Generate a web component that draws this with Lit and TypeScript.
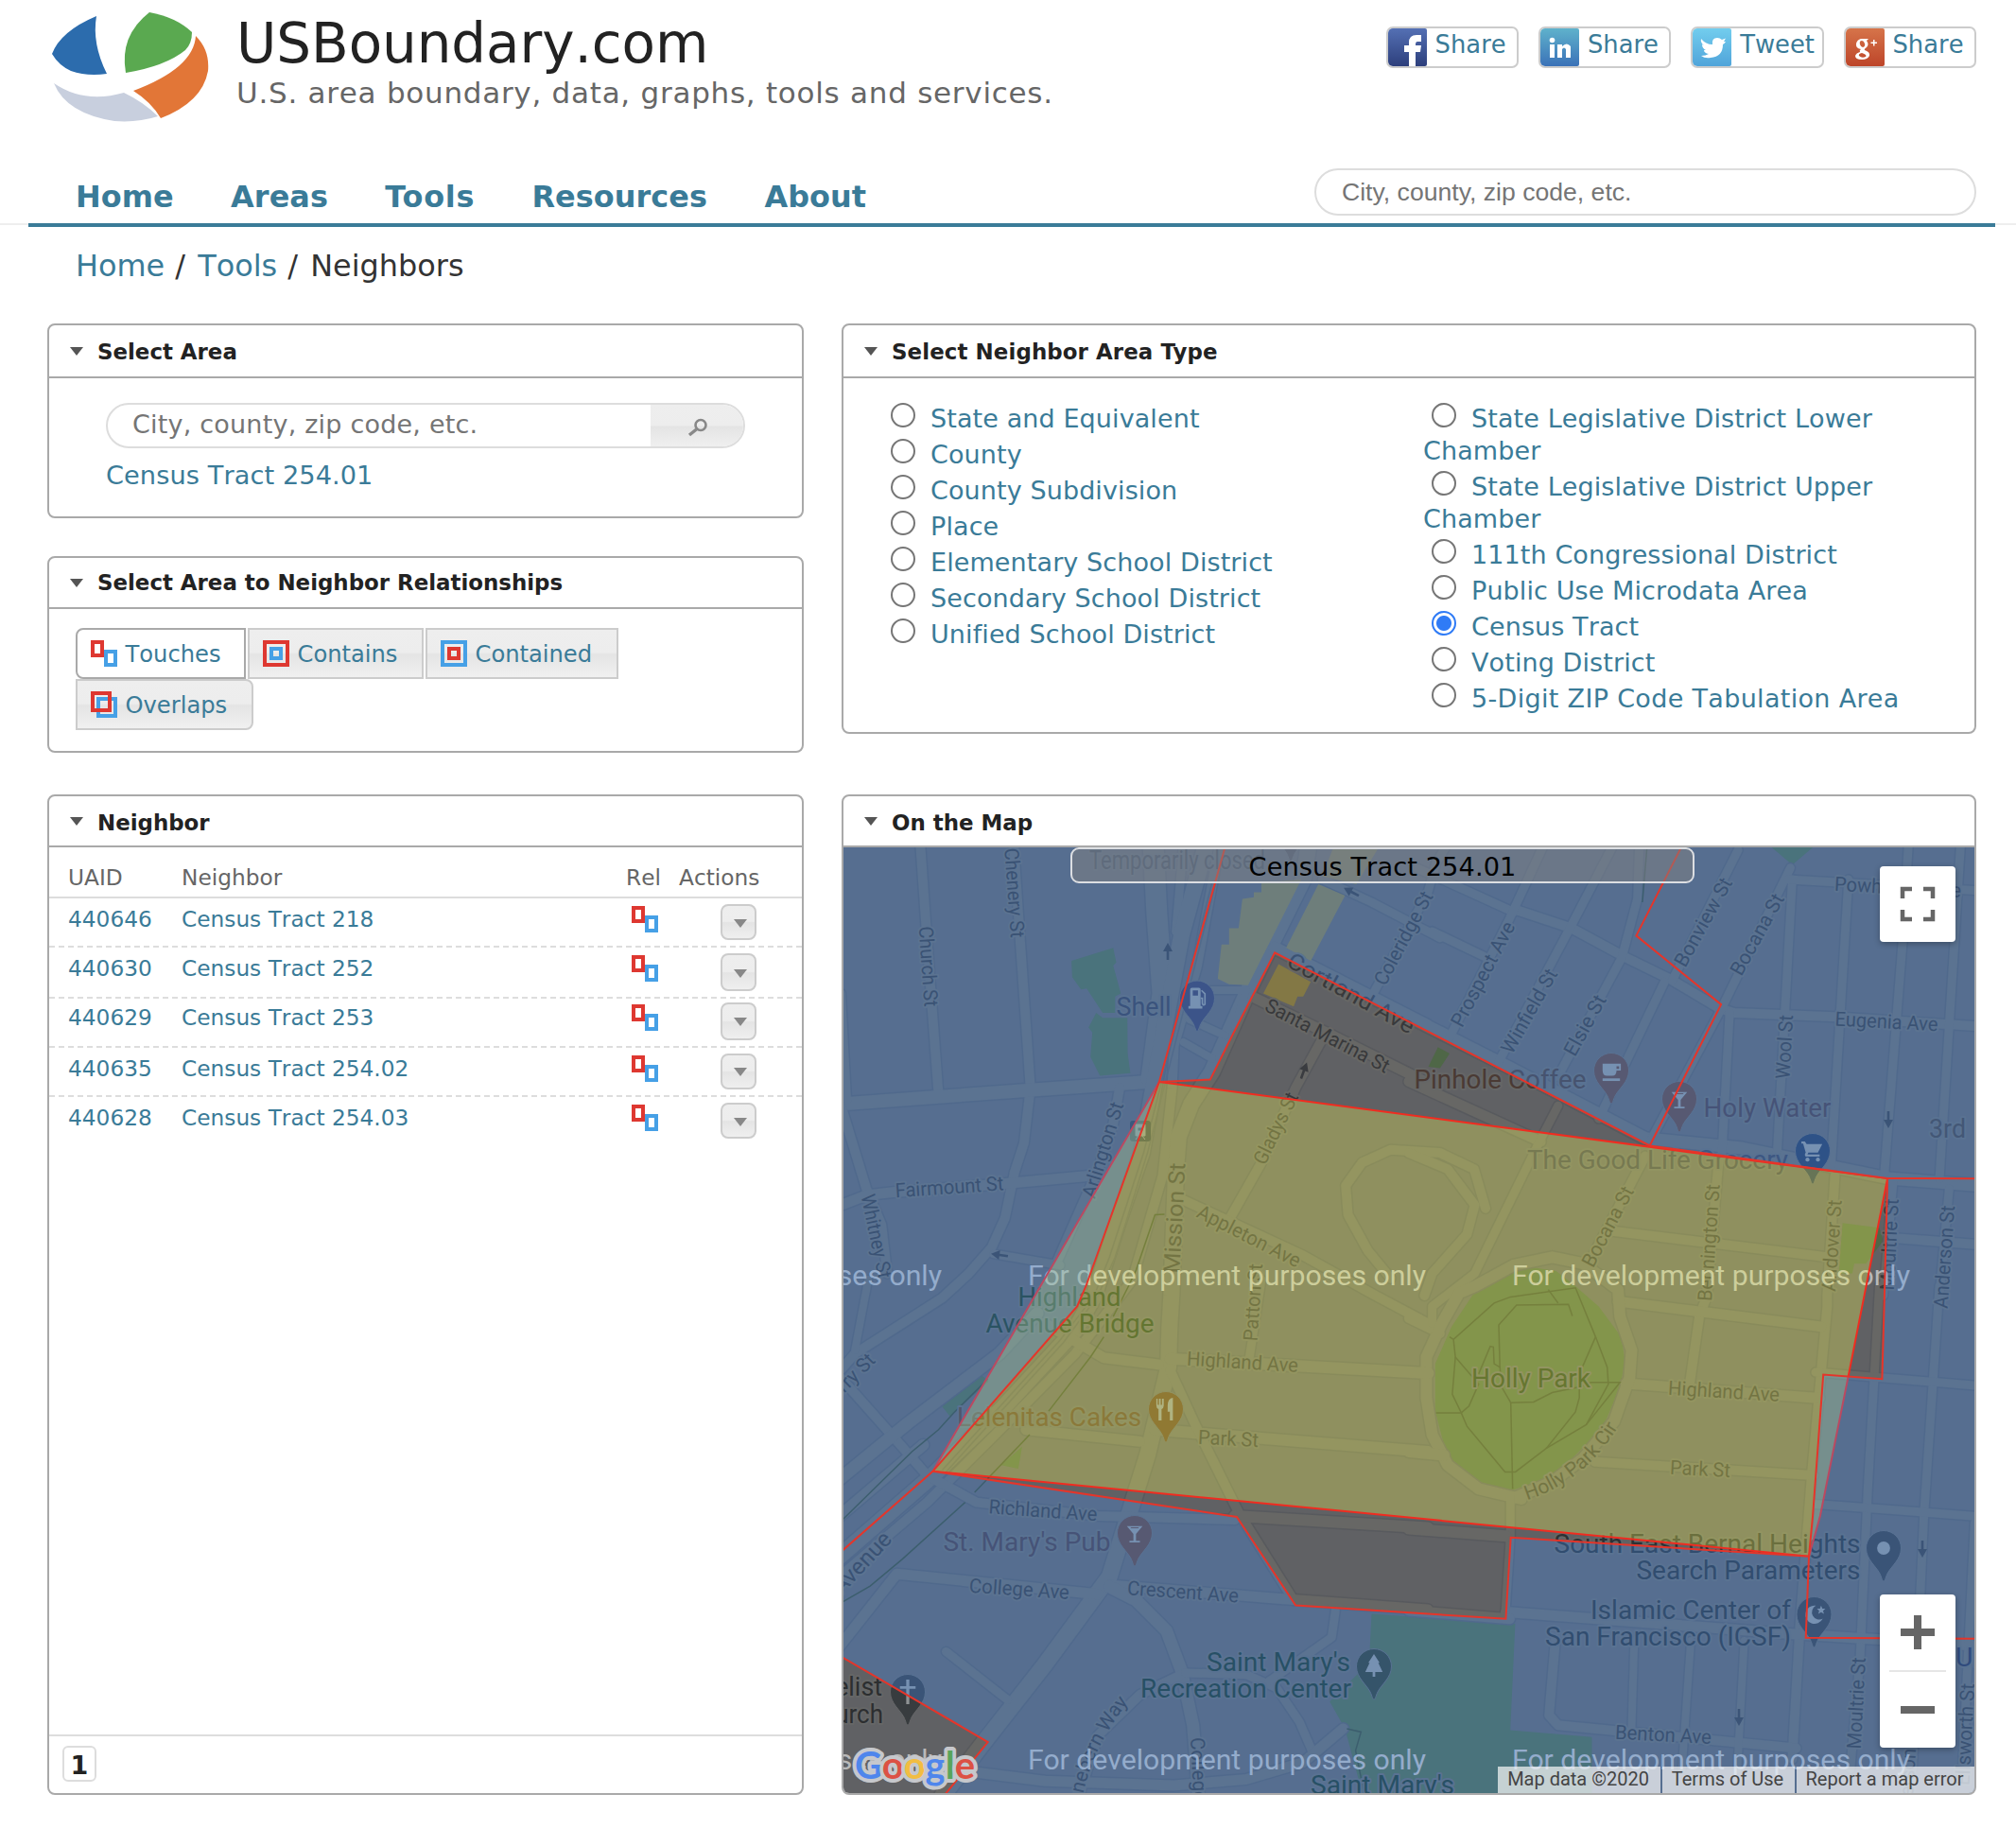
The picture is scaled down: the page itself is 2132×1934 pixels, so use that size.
import { LitElement, html, svg, css, nothing } from "lit";
import { customElement, property } from "lit/decorators.js";
import { classMap } from "lit/directives/class-map.js";

/* ---------- map survey sheets: origin and units per pixel ---------- */
const SHEETS: Record<string, [number, number, number, number]> = {
  A: [880, 830, 2.489, 2.904],
  B: [1490, 830, 2.442, 2.904],
  C: [880, 1360, 2.489, 2.8],
  D: [1490, 1360, 2.442, 2.8],
};

/** Turns "A 10,20 30,40 B 5,6" into map coordinates "x,y x,y". */
function trace(src: string): string {
  let s = SHEETS.A;
  const out: string[] = [];
  for (const tok of src.trim().split(/\s+/)) {
    if (SHEETS[tok]) s = SHEETS[tok];
    else {
      const [x, y] = tok.split(",").map(Number);
      out.push(`${(s[0] + x / s[2]).toFixed(1)},${(s[1] + y / s[3]).toFixed(1)}`);
    }
  }
  return out.join(" ");
}

const ROADS: [number, string][] = [
  [10, "A 232,180 255,560 280,950"],
  [10, "A 478,180 495,480 522,930 505,1100 480,1190 455,1330 420,1420 360,1500 290,1575 C 60,200 -10,290"],
  [8, "C 95,-20 60,190"],
  [14, "A 20,980 290,957 520,937 830,912"],
  [8, "A 25,640 40,970"],
  [10, "A 25,990 90,1240 130,1350 145,1500"],
  [11, "A 20,1292 90,1260 165,1250 450,1225 680,1200"],
  [10, "A 757,930 740,1040 700,1180 590,1470"],
  [9, "A 425,1440 600,1475"],
  [9, "A 925,180 905,450"],
  [22, "A 845,180 855,400 870,640 840,900"],
  [17, "A 985,180 920,460 850,900 815,1130 750,1350 690,1568 C 640,130 450,360 265,560 20,800"],
  [10, "A 1020,180 960,560 900,800 895,930 870,1200 790,1520 C 640,200 420,450 250,640 20,860"],
  [17, "A 1255,180 1240,290 1100,620 1000,880 945,980 912,1080 905,1180 893,1568 C 888,120 885,240 830,500 780,680 730,860 560,1120 400,1350 290,1510"],
  [8, "A 940,720 1035,770"],
  [8, "A 925,790 1000,840"],
  [8, "A 990,630 1090,630 1060,740"],
  [9, "A 1290,290 1420,360 1600,470 B 60,450 200,530"],
  [9, "B 20,255 270,390"],
  [10, "B 280,385 420,440 560,530 680,600 800,685 840,700 1100,712 1475,742"],
  [13, "A 1165,500 1568,740 B 0,712 250,862 610,1085 860,1115 1240,1208 1475,1230"],
  [11, "A 1115,655 1300,760 1568,915 B 0,910 340,1095"],
  [10, "A 1290,780 1220,930 1130,1160 1045,1335"],
  [10, "A 925,1275 1240,1445 1430,1568 C 1568,110 D 0,95 80,140"],
  [10, "A 1720,1300 1690,1180 1600,1130 1470,1120 1395,1160 1352,1230 1358,1320 1410,1430 1470,1515"],
  [10, "B 0,1130 100,1180 170,1290 150,1380 60,1500 40,1568"],
  [9, "A 1420,650 1568,330 B 70,240 100,180"],
  [9, "B 105,775 260,410 350,180"],
  [9, "B 232,850 420,430 530,180"],
  [9, "B 385,895 550,530 590,350 595,180"],
  [9, "B 490,1025 660,605"],
  [9, "B 680,600 850,200"],
  [9, "B 625,1090 810,680 985,255"],
  [9, "B 808,1140 828,700"],
  [9, "B 950,1150 990,290"],
  [9, "B 1090,1170 1135,290"],
  [9, "B 1228,1190 1275,480 1290,180"],
  [9, "B 1370,1210 1425,180"],
  [9, "B 980,290 1475,325"],
  [9, "B 385,985 335,1100 170,1500 D 60,60 60,110"],
  [10, "B 610,1140 460,1480"],
  [10, "B 800,1150 770,1568 D 750,90 725,290"],
  [10, "B 1100,1200 1080,1568 D 1080,60 1040,560 1010,1000 990,1400"],
  [9, "B 1250,1220 1225,1568 D 1215,0 1185,600 1165,1100 1140,1430"],
  [9, "B 1395,1240 1370,1568 D 1370,0 1330,680 1300,1430"],
  [10, "B 525,1370 1080,1450"],
  [10, "B 1240,1390 1475,1412"],
  [11, "D 540,45 1065,120"],
  [11, "D 560,288 1060,332"],
  [10, "D 480,520 1045,560"],
  [9, "D 1050,255 1475,295"],
  [9, "D 1050,645 1475,682"],
  [11, "D 250,965 1000,1030 1475,1065"],
  [10, "D 378,1050 362,1270 385,1300 1000,1368"],
  [8, "D 582,1050 575,1310"],
  [8, "D 728,1050 705,1430"],
  [8, "D 866,1050 848,1430"],
  [9, "D 1461,700 1430,1420"],
  [12, "D 290,630 180,600 100,530 60,440 45,330 45,210 85,110 130,20 B 170,1540 270,1475 370,1450 450,1470 540,1550 D 545,90 575,190 570,270 530,400 450,510 370,580 270,628"],
  [11, "C 560,110 715,212 860,232"],
  [12, "C 890,215 1568,258 D 0,255 50,258"],
  [11, "C 510,425 810,460"],
  [12, "C 850,425 1568,490 D 0,490 90,500"],
  [10, "C 890,250 960,420 1070,670 1215,930"],
  [9, "C 1130,-20 1098,215"],
  [9, "D 262,620 262,740 248,985"],
  [12, "C 1060,680 1568,715 D 0,718 250,740"],
  [11, "C 730,885 1180,925 1568,958 D 0,960 260,985"],
  [11, "C 10,1080 170,852 700,912"],
  [10, "C 10,255 180,470 250,560 380,640 700,680 1060,692"],
  [13, "C 10,580 200,405 440,200 540,80"],
  [12, "C 10,690 240,470"],
  [13, "C 730,890 800,930 880,1020 920,1140 950,1300 965,1520"],
  [10, "C 920,1150 810,1210 700,1330 650,1510"],
  [9, "C 930,1145 1090,1150 1170,1190 1230,1290 1265,1380"],
  [11, "C 1345,1310 1240,1410 1090,1460 900,1478 560,1465 380,1440"],
  [9, "C 1325,960 1315,1040 1150,1170"],
  [9, "C 300,1082 462,1225"],
];

const GREENS = [
  "A 630,540 740,500 748,545 740,555 760,640 745,650 745,700 712,700 670,625 655,628 632,590",
  "A 695,700 712,715 777,715 778,825 785,885 705,893 680,835 685,760 675,745",
  "C 285,350 390,260 412,282 310,385",
  "C 445,530 500,475 490,540",
  "B 1120,1345 1215,1360 1225,1400 1180,1470 1150,1470 1145,1500 1110,1500",
  "B 935,190 1045,190 990,245",
  "B 32,432 92,482 50,465",
  "B 75,805 105,825 80,870 50,865",
  "C 1420,970 1798,1000 1785,1315 2000,1335 2000,1520 1400,1520 1350,1310 1310,1230 1400,1130 1415,1080",
  "D 430,0 490,60 548,150 558,220 545,300 500,420 430,500 370,565 265,605 150,570 95,490 68,370 68,230 110,120 180,0 240,-45 310,-57 380,-45",
];

const BUILDINGS = [
  "A 1130,300 1235,290 1095,615 1045,612 1015,595 1025,490 1045,490 1045,440 1070,440 1080,350 1110,345 1110,330 1130,330",
  "A 1280,305 1350,340 1260,540 1195,500",
  "A 1320,190 1440,190 1380,305 1290,280",
  "A 1175,550 1260,605 1240,650 1225,650 1215,680 1135,640",
];

const TRAILS = [
  "D 105,150 115,158 220,50 262,32 430,5 482,150 512,240 515,290 458,410 355,480 275,550 248,550 150,415 135,375 112,320 120,210 115,158",
  "D 120,210 180,290 155,355 135,375 70,375",
  "D 180,260 210,178 218,180 220,230 235,240 232,115 278,56 412,54 422,88",
  "D 235,240 240,300 263,345 322,343 370,315 435,300 470,285 545,285 458,410",
  "D 263,345 268,600",
  "D 482,150 440,260 440,330 430,372 355,480",
  "D 360,10 385,50",
];

const RAILS = [
  "C 20,700 210,490 280,425 320,375 410,275",
  "C 20,940 100,888 185,808 350,640",
  "C 375,610 520,440",
  "C 570,370 680,210 715,150",
  "A 875,1318 850,1320 800,1490 C 780,0 740,90",
  "C 1355,1310 1392,1320 1378,1375 1400,1500",
  "B 615,190 603,360",
];

const FOCUS = trace("A 861,912 B 1236,1208 D 1135,265 1062,680 1033,800 C 265,548");
const HOLE = trace(
  "A 861,912 995,905 1055,765 1165,515 B 622,1108 1236,1208 1228,1568 D 1222,275 1070,262 1043,680 1033,800 263,744 250,985 C 1220,945 1065,683 265,548 645,60 668,0"
);
const CORNER = trace("C 20,1094 410,1350 290,1515 20,1515");
const TRACT_EDGES = [
  "A 1037,180 861,912",
  "B 706,185 587,463 806,674 622,1108",
  "B 1236,1208 1475,1209",
  "D 1033,800 1025,1041 1475,1044",
  "C 265,548 20,790",
];

interface StreetName { t: string; x: number; y: number; a: number; w: number; big?: boolean }
const STREETS: StreetName[] = [
  { t: "Church St", x: 982, y: 1022, a: 86, w: 85 },
  { t: "Chenery St", x: 1073, y: 944, a: 86, w: 95 },
  { t: "Arlington St", x: 1166, y: 1216, a: -73, w: 105 },
  { t: "Fairmount St", x: 1004, y: 1255, a: -4, w: 115 },
  { t: "Whitney St", x: 927, y: 1307, a: 78, w: 90 },
  { t: "Mission St", x: 1242, y: 1288, a: -87, w: 117, big: true },
  { t: "Gladys St", x: 1349, y: 1193, a: -64, w: 82 },
  { t: "Appleton Ave", x: 1321, y: 1307, a: 27, w: 120 },
  { t: "Cortland Ave", x: 1429, y: 1050, a: 29, w: 150, big: true },
  { t: "Santa Marina St", x: 1404, y: 1095, a: 27.5, w: 145 },
  { t: "Coleridge St", x: 1484, y: 992, a: -62, w: 109 },
  { t: "Prospect Ave", x: 1568, y: 1030, a: -62.4, w: 122 },
  { t: "Winfield St", x: 1617, y: 1069, a: -60.5, w: 99 },
  { t: "Elsie St", x: 1676, y: 1084, a: -61, w: 70 },
  { t: "Bonview St", x: 1801, y: 975, a: -61, w: 104 },
  { t: "Bocana St", x: 1858, y: 988, a: -61, w: 95 },
  { t: "Wool St", x: 1887, y: 1107, a: -87, w: 68 },
  { t: "Eugenia Ave", x: 1995, y: 1080, a: 3, w: 109 },
  { t: "Powhattan Ave", x: 2007, y: 938, a: 3, w: 134 },
  { t: "Bocana St", x: 1700, y: 1297, a: -62, w: 93 },
  { t: "Bennington St", x: 1807, y: 1314, a: -86, w: 124 },
  { t: "Andover St", x: 1937, y: 1317, a: -86, w: 97 },
  { t: "Moultrie St", x: 1998, y: 1316, a: -87, w: 97 },
  { t: "Anderson St", x: 2056, y: 1329, a: -86, w: 109 },
  { t: "Highland Ave", x: 1314, y: 1440, a: 3.5, w: 118 },
  { t: "Highland Ave", x: 1823, y: 1471, a: 3.5, w: 118 },
  { t: "Park St", x: 1299, y: 1521, a: 3, w: 64 },
  { t: "Park St", x: 1798, y: 1553, a: 3, w: 64 },
  { t: "Patton St", x: 1325, y: 1377, a: -86, w: 82 },
  { t: "Richland Ave", x: 1103, y: 1597, a: 4, w: 115 },
  { t: "College Ave", x: 1078, y: 1680, a: 4, w: 106 },
  { t: "Crescent Ave", x: 1251, y: 1683, a: 4, w: 118 },
  { t: "College Ave", x: 1269, y: 1890, a: 87, w: 106 },
  { t: "Benton Ave", x: 1759, y: 1834, a: 3, w: 102 },
  { t: "Avenue", x: 911, y: 1652, a: -47, w: 80, big: true },
  { t: "Cherry St", x: 892, y: 1464, a: -45, w: 84 },
  { t: "Moultrie St", x: 1963, y: 1801, a: -87, w: 97 },
  { t: "Ellsworth St", x: 2078, y: 1834, a: -87, w: 108 },
  { t: "Anderson St", x: 2017, y: 1880, a: -87, w: 109 },
];

interface Place { t: string; x: number; y: number; w: number; c: string }
const PLACES: Place[] = [
  { t: "Temporarily closed", x: 1152, y: 919, w: 186, c: "#3e3f42" },
  { t: "Shell", x: 1180.5, y: 1074, w: 58, c: "#383a48" },
  { t: "Pinhole Coffee", x: 1495.5, y: 1150.5, w: 182, c: "#4a3a34" },
  { t: "Holy Water", x: 1801.5, y: 1180.5, w: 135, c: "#4a3a40" },
  { t: "3rd", x: 2040, y: 1203, w: 39, c: "#46403e" },
  { t: "The Good Life Grocery", x: 1615, y: 1235.5, w: 276, c: "#3d3f50" },
  { t: "Highland", x: 1076.5, y: 1380.5, w: 109, c: "#223a22" },
  { t: "Avenue Bridge", x: 1042.5, y: 1408.5, w: 178, c: "#223a22" },
  { t: "Holly Park", x: 1556, y: 1467, w: 126, c: "#263c20" },
  { t: "Lelenitas Cakes", x: 1012, y: 1508, w: 195, c: "#5a3f2e" },
  { t: "St. Mary's Pub", x: 997.5, y: 1639.5, w: 177, c: "#4a3a40" },
  { t: "Saint Mary's", x: 1276, y: 1766.5, w: 152, c: "#1e3626" },
  { t: "Recreation Center", x: 1206, y: 1794.5, w: 223, c: "#1e3626" },
  { t: "Evangelist", x: 811, y: 1793, w: 122, c: "#2c2e30" },
  { t: "Church", x: 852, y: 1822, w: 82, c: "#2c2e30" },
  { t: "Saint Mary's", x: 1386, y: 1897, w: 152, c: "#1e3626" },
  { t: "South East Bernal Heights", x: 1643.5, y: 1641.5, w: 324, c: "#2c3134" },
  { t: "Search Parameters", x: 1730.5, y: 1669.5, w: 237, c: "#2c3134" },
  { t: "Islamic Center of", x: 1682, y: 1712, w: 212, c: "#2c3134" },
  { t: "San Francisco (ICSF)", x: 1634, y: 1739.5, w: 260, c: "#2c3134" },
  { t: "Un", x: 2068, y: 1762, w: 34, c: "#2a2f48" },
];

const GLYPHS: Record<string, unknown> = {
  fuel: svg`<path d="M-8 11V-10Q-8 -12 -6 -12H2Q4 -12 4 -10V11Z M-5 -9V-3H1V-9Z" fill-rule="evenodd" /><path d="M-10 9H6V12H-10Z" /><path d="M5 -9L9 -5V7Q7 9 6 6V0H4" fill="none" stroke="currentColor" stroke-width="1.8" />`,
  cup: svg`<path d="M-10 -8H11V0H6Q6 6 1 6H-5Q-10 6 -10 0Z M6 -5V-2H9V-5Z" fill-rule="evenodd" /><path d="M-10 9H10V12H-10Z" />`,
  glass: svg`<path d="M-9 -8H9L1.5 1V9H6V11H-6V9H-1.5V1Z M-4 -5.500H4L5 -6.500H-5Z" fill-rule="evenodd" />`,
  cart: svg`<path d="M-13 -11H-9L-7 -8H11L6 2H-5L-6 4H8V6.500H-8Q-10 5 -8 2L-11 -8.500H-13Z" /><circle cx="-6" cy="10" r="2.300" /><circle cx="6" cy="10" r="2.300" />`,
  fork: svg`<path d="M-11 -12H-9.500V-5H-8V-12H-6V-5H-4.500V-12H-2.500V-4Q-2.500 -1 -5 0V13H-8.500V0Q-11 -1 -11 -4Z" /><path d="M2 -4Q2 -12 8 -13V13H4.500V3H2Z" />`,
  cross: svg`<path d="M-1.800 -14H1.800V-6.500H9V-3.500H1.800V14H-1.800V-3.500H-9V-6.500H-1.800Z" />`,
  tree: svg`<path d="M0 -14L6.500 -4H5L10 6.500H1.500V12H-1.500V6.500H-10L-5 -4H-6.500Z" />`,
  dot: svg`<circle cx="0" cy="0" r="7.500" />`,
  moon: svg`<path d="M2 -10A10.500 10.500 0 1 0 10 5A8.500 8.500 0 1 1 2 -10Z" /><path d="M8 -10L9.500 -6.500L13 -6.500L10.300 -4L11.300 -0.500L8 -2.500L4.800 -0.500L5.800 -4L3.200 -6.500L6.700 -6.500Z" />`,
  none: nothing,
};

const PINS: { x: number; y: number; c: string; g: string }[] = [
  { x: 1365, y: 876, c: "#4b4648", g: "none" },
  { x: 1266, y: 1055.5, c: "#3b3c5a", g: "fuel" },
  { x: 1704, y: 1132, c: "#624238", g: "cup" },
  { x: 1776, y: 1162, c: "#624238", g: "glass" },
  { x: 1917, y: 1217, c: "#283957", g: "cart" },
  { x: 1233, y: 1490, c: "#623f25", g: "fork" },
  { x: 1200, y: 1621, c: "#624238", g: "glass" },
  { x: 960, y: 1789, c: "#383c3f", g: "cross" },
  { x: 1453, y: 1762, c: "#313b2d", g: "tree" },
  { x: 1992, y: 1637, c: "#383c40", g: "dot" },
  { x: 1918.5, y: 1707, c: "#383c40", g: "moon" },
];

const ARROWS: [number, number, number][] = [
  [1235, 1006, 0],
  [1057, 1327, -82],
  [1429, 943, -62],
  [1379, 1132, 20],
  [1997, 1184, 180],
  [2033, 1638, 180],
  [1839, 1816, 180],
];

@customElement("tract-map")
class TractMap extends LitElement {
  static styles = css`
    :host { display: block; position: relative; height: 100%; overflow: hidden; border-radius: 0 0 6px 6px; }
    svg { display: block; }
    .street { font: 400 21px Roboto, sans-serif; fill: #38393b; stroke: #676765; stroke-width: 4px; paint-order: stroke; stroke-linejoin: round; text-anchor: middle; }
    .big { font-size: 24px; }
    .along { text-anchor: start; }
    .place { font: 400 27.500px Roboto, sans-serif; stroke: #656666; stroke-width: 4px; paint-order: stroke; stroke-linejoin: round; }
    .notice { font: 400 29px Roboto, sans-serif; fill: #b9b9b9; }
    .logo { font: 700 41px "Lato", sans-serif; paint-order: stroke; stroke: #c6c8cc; stroke-width: 8px; stroke-linejoin: round; }
    .caption { position: absolute; left: 240px; top: 0; width: 656px; height: 34px; border: 2px solid #dcdee2; border-radius: 9px; background: rgba(128, 128, 128, 0.5); color: #000; font: 27.200px/37px "DejaVu Sans", sans-serif; font-kerning: none; letter-spacing: 0.100px; text-align: center; }
    .ctl { position: absolute; left: 1096px; width: 80px; background: #fff; border-radius: 4px; box-shadow: 0 2px 6px rgba(0, 0, 0, 0.3); }
    .full { top: 20px; height: 80px; }
    .zoom { top: 790px; height: 162px; }
    .legal { position: absolute; right: 0; bottom: 0; display: flex; gap: 2px; font: 20px/28px Roboto, sans-serif; color: #444; }
    .legal span { box-sizing: border-box; height: 28px; line-height: 27px; padding-right: 2px; text-align: center; white-space: nowrap; background: rgba(245, 245, 245, 0.72); }
    .l1 { width: 172px; } .l2 { width: 140px; } .l3 { width: 188px; }
  `;

  render() {
    const roads = ROADS.map(([w, p]) => [w, trace(p)] as [number, string]);
    return html`
      <svg width="1196" height="1000" viewBox="892 896 1196 1000">
        <rect x="892" y="896" width="1196" height="1000" fill="#606164" />
        ${GREENS.map((g) => svg`<polygon points=${trace(g)} fill="#4f6747" />`)}
        <g fill="none" stroke="#585a5e" stroke-linejoin="round" stroke-linecap="round">
          ${roads.map(([w, p]) => svg`<polyline points=${p} stroke-width=${w + 3} />`)}
        </g>
        <g fill="none" stroke="#676765" stroke-linejoin="round" stroke-linecap="round">
          ${roads.map(([w, p]) => svg`<polyline points=${p} stroke-width=${w} />`)}
        </g>
        ${BUILDINGS.map((g) => svg`<polygon points=${trace(g)} fill="#837845" />`)}
        <g fill="none" stroke="#3c4a33" stroke-width="1.500">
          ${TRAILS.map((p) => svg`<polyline points=${trace(p)} />`)}
          ${RAILS.map((p) => svg`<polyline points=${trace(p)} />`)}
        </g>
        <g fill="none" stroke="#5a5c5e" stroke-width="1.500">
          <polyline points=${trace("A 1000,300 870,900 820,1130 730,1450 690,1568 C 600,160 290,545")} />
          <polyline points=${trace("A 1010,300 880,900 830,1130 745,1450 700,1568 C 610,165 300,550")} />
        </g>
        ${ARROWS.map(([x, y, a]) => svg`<path transform="translate(${x} ${y}) rotate(${a})" d="M0 -9L5 0H1.300V9H-1.300V0H-5Z" fill="#3a3c40" />`)}
        ${STREETS.map((s) => svg`<text class=${classMap({ street: true, big: !!s.big })} transform="translate(${s.x} ${s.y}) rotate(${s.a})" dy="0.35em" textLength=${s.w} lengthAdjust="spacingAndGlyphs">${s.t}</text>`)}
        <path id="cir" d="M1615 1586Q1678 1566 1714 1504" fill="none" />
        <text class="street along"><textPath href="#cir">Holly Park Cir</textPath></text>
        <path id="way" d="M1142 1922Q1148 1850 1202 1790" fill="none" />
        <text class="street along"><textPath href="#way">Genebern Way</textPath></text>
        <rect x="1195" y="1185" width="22" height="22" rx="3" fill="#39424a" />
        <path d="M1201 1189H1211V1201H1201Z M1203 1192V1196H1209V1192Z M1201 1205L1204 1201M1211 1205L1208 1201" fill="#85888c" stroke="#85888c" fill-rule="evenodd" />
        ${PLACES.map((p) => svg`<text class="place" x=${p.x} y=${p.y} textLength=${p.w} lengthAdjust="spacingAndGlyphs" fill=${p.c}>${p.t}</text>`)}
        ${PINS.map((p) => svg`<g transform="translate(${p.x} ${p.y})">
          <path d="M0 35C-1.500 35 -2 31 -4 27C-8 19 -18.500 12 -18.500 0A18.500 18.500 0 0 1 18.500 0C18.500 12 8 19 4 27C2 31 1.500 35 0 35Z" fill=${p.c} stroke="#656668" stroke-width="1" />
          <g fill="#8f9294" color="#8f9294" transform="scale(.92)">${GLYPHS[p.g]}</g>
        </g>`)}
        ${[1358.500, 1870.500].map((y) => [575, 1087, 1599].map((x) => svg`<text class="notice" x=${x} y=${y} textLength="421" lengthAdjust="spacingAndGlyphs">For development purposes only</text>`))}
        <polygon points=${FOCUS} fill="#fdff57" fill-opacity="0.300" stroke="#f02c20" stroke-width="2" />
        <path d="M880 880H2100V1910H880Z M${HOLE}Z M${CORNER}Z" fill="#3f90fa" fill-opacity="0.300" fill-rule="evenodd" />
        <g fill="none" stroke="#e5352a" stroke-width="2">
          <polygon points=${HOLE} />
          <polygon points=${CORNER} />
          ${TRACT_EDGES.map((e) => svg`<polyline points=${trace(e)} />`)}
        </g>
        <text class="logo" x="904" y="1881" textLength="127" lengthAdjust="spacingAndGlyphs"><tspan fill="#4f86ec">G</tspan><tspan fill="#dc5144">o</tspan><tspan fill="#f2bd42">o</tspan><tspan fill="#4f86ec">g</tspan><tspan fill="#58a55c">l</tspan><tspan fill="#dc5144">e</tspan></text>
      </svg>
      <div class="caption">Census Tract 254.01</div>
      <div class="ctl full">
        <svg width="80" height="80" viewBox="0 0 80 80"><path d="M24 34V24H34M46 24H56V34M56 46V56H46M34 56H24V46" fill="none" stroke="#666" stroke-width="4.500" /></svg>
      </div>
      <div class="ctl zoom">
        <svg width="80" height="162" viewBox="0 0 80 162"><path d="M22 36H36V22H44V36H58V44H44V58H36V44H22Z M22 118H58V126H22Z" fill="#666" /><path d="M10 80H70V82H10Z" fill="#e6e6e6" /></svg>
      </div>
      <div class="legal"><span class="l1">Map data ©2020</span><span class="l2">Terms of Use</span><span class="l3">Report a map error</span></div>
    `;
  }
}

@customElement("fold-panel")
class FoldPanel extends LitElement {
  @property() heading = "";
  static styles = css`
    :host { display: flex; flex-direction: column; box-sizing: border-box; border: 2px solid #a9a9a9; border-radius: 8px; background: #fff; }
    .bar { display: flex; align-items: center; box-sizing: border-box; height: var(--bar, 54px); border-bottom: 2px solid #a9a9a9; padding-left: 22px; gap: 15px; color: #222; font: bold 22.900px "DejaVu Sans", sans-serif; letter-spacing: var(--track, 0px); white-space: nowrap; }
    .bar span { padding-top: var(--drop, 0px); padding-bottom: var(--rise, 0px); }
    .body { flex: 1; min-height: 0; letter-spacing: 0; }
  `;
  render() {
    return html`<div class="bar"><svg width="14" height="9" viewBox="0 0 14 9"><path d="M0 0H14L7 9Z" fill="#555" /></svg><span>${this.heading}</span></div><div class="body"><slot></slot></div>`;
  }
}

const RED = "#de3831";
const BLUE = "#46a0e6";
const RELATION: Record<string, unknown> = {
  Touches: svg`<path d="M2 2H12V16H2Z" stroke=${RED} /><path d="M16 12H26V26H16Z" stroke=${BLUE} />`,
  Contains: svg`<path d="M2 2H26V26H2Z" stroke=${RED} /><path d="M9 9H19V19H9Z" stroke=${BLUE} />`,
  Contained: svg`<path d="M2 2H26V26H2Z" stroke=${BLUE} /><path d="M9 9H19V19H9Z" stroke=${RED} />`,
  Overlaps: svg`<path d="M8 8H26V26H8Z" stroke=${BLUE} /><path d="M2 2H20V20H2Z" stroke=${RED} />`,
};
const relIcon = (k: string) => html`<svg class="rel" width="28" height="28" viewBox="0 0 28 28" fill="none" stroke-width="4">${RELATION[k]}</svg>`;

const SHARES = [
  { k: "fb", t: "Share", g: svg`<path d="M22 40V25H17V18H22V15Q22 7 30 7H35V14H31Q29 14 29 17V18H35L34 25H29V40Z" />` },
  { k: "li", t: "Share", g: svg`<path d="M10 17H15V31H10Z M18 17H23V19Q28 14 32 19V31H27V22Q25 19 23 22V31H18Z" /><circle cx="12.500" cy="12.500" r="2.800" />` },
  { k: "tw", t: "Tweet", g: svg`<path d="M9 11Q14 17 21 17Q20 10 26 10Q29 10 31 12L35 10.500L33 14L35 14Q34 16 32 17Q32 30 19 31Q13 32 9 29Q14 29 17 27Q12 26 12 23H14Q10 21 10 17L12 18Q8 15 9 11Z" />` },
  { k: "gp", t: "Share", g: svg`<path d="M13 11H24L22 13Q25 17 22 20Q19 22 20 23Q26 25 25 29Q23 33 17 33Q10 33 10 29Q11 26 15 25Q14 23 16 22Q10 21 11 16Q12 12 16 11Z M17 13Q14 13 15 17Q16 20 18 20Q21 19 20 16Q19 13 17 13Z M17 26Q13 27 14 29Q17 32 21 30Q23 28 17 26Z" fill-rule="evenodd" /><path d="M29 12H30.500V14.500H33V16H30.500V18.500H29V16H26.500V14.500H29Z" />` },
];

const ROWS = [
  { id: "440646", n: "218", c: "" },
  { id: "440630", n: "252", c: "tall" },
  { id: "440629", n: "253", c: "mid" },
  { id: "440635", n: "254.02", c: "low" },
  { id: "440628", n: "254.03", c: "last" },
];

@customElement("app-root")
class AppRoot extends LitElement {
  static styles = css`
    :host { display: block; width: 2132px; height: 1934px; background: #fff; color: #333; font-family: "DejaVu Sans", Verdana, sans-serif; font-kerning: none; overflow: hidden; }
    * { box-sizing: border-box; }
    .link, nav span { color: #3a7b98; }
    header { height: 158px; display: flex; padding: 13px 42px 0 52px; }
    .logo { width: 169px; height: 116px; flex: none; }
    .brand { margin-left: 29px; flex: 1; white-space: nowrap; }
    .name { height: 66px; font-size: 57.900px; letter-spacing: -0.050px; line-height: 66px; color: #222; }
    .tag { margin-top: -4px; font-size: 31px; letter-spacing: 0.730px; line-height: 46px; color: #666; }
    .shares { display: flex; gap: 20.800px; margin-top: 15px; }
    .share { display: flex; width: 140.500px; height: 44px; border: 2px solid #ccc; border-radius: 7px; overflow: hidden; font-size: 25.800px; line-height: 34px; white-space: nowrap; }
    .share svg { flex: none; margin-right: 9px; border-radius: 4px 2px 2px 4px; }
    .fb { background: linear-gradient(#5470b4, #2d3f7c); } .li { background: linear-gradient(#5fb2cc, #3b72b8); }
    .tw { background: linear-gradient(#72cdee, #50a4da); } .gp { background: linear-gradient(#d6744a, #bd4529); }
    .menu { height: 82px; display: flex; justify-content: space-between; padding: 0 42px 0 80px; border-bottom: 4px solid transparent; background: linear-gradient(#3a7b98, #3a7b98) 30px 78px / 2080px 4px no-repeat border-box, linear-gradient(#eee, #eee) 0 78px / 100% 2px no-repeat border-box; }
    nav { display: flex; gap: 60.300px; font: bold 31.900px/44px "DejaVu Sans", sans-serif; letter-spacing: 0.080px; padding-top: 28px; }
    nav span:nth-child(3) { letter-spacing: 0.700px; }
    .find { margin-top: 20px; width: 700px; height: 50px; border: 2px solid #ddd; border-radius: 25px; padding-left: 27px; font: 26.600px/46px "Liberation Sans", sans-serif; color: #757575; }
    .crumbs { height: 102px; padding: 18px 0 0 80px; font-size: 31.900px; line-height: 46px; white-space: pre; }
    .crumbs i { font-style: normal; margin: 0 3px 0 1px; }
    .top { display: flex; gap: 40px; margin-left: 50px; height: 498px; align-items: flex-start; }
    .left { width: 800px; display: flex; flex-direction: column; gap: 40px; }
    .area { height: 206px; --bar: 56px; --drop: 1px; }
    .relations { height: 208px; --rise: 1px; }
    .types { width: 1200px; height: 434px; --bar: 56px; --drop: 1px; --track: 0.100px; }
    .pick { margin: 26px 0 0 60px; width: 676px; height: 48px; display: flex; border: 2px solid #ddd; border-radius: 24px; overflow: hidden; font-size: 27px; letter-spacing: 0.200px; line-height: 41px; color: #757575; }
    .pick span { flex: 1; padding-left: 26px; white-space: nowrap; }
    .go { width: 98px; display: flex; justify-content: center; align-items: center; padding: 4px 0 0 2px; background: linear-gradient(#eee, #ededed 50%, #e4e4e4 52%, #efefef); }
    .chosen { margin: 9px 0 0 60px; font-size: 27.200px; letter-spacing: 0.080px; line-height: 40px; }
    .toggles { display: flex; flex-wrap: wrap; column-gap: 2px; width: 640px; margin: 20px 0 0 28px; }
    .tog { height: 54px; display: flex; align-items: center; border: 2px solid #ccc; background: linear-gradient(#eee, #ededed 48%, #e4e4e4 52%, #f0f0f0); padding-left: 14px; gap: 8.500px; font-size: 24.200px; white-space: nowrap; }
    .tog span { padding-top: 1px; }
    .touches { width: 180px; background: #fff; border-color: #a9a9a9; border-radius: 8px 0 0 8px; }
    .contains { width: 186px; } .contained { width: 204px; } .overlaps { width: 188px; border-radius: 0 8px 8px 0; }
    .radios { display: flex; padding: 26px 0 0 42px; font-size: 27px; letter-spacing: 0.100px; line-height: 34px; }
    .col1 { width: 571px; } .col2 { width: 560px; }
    .opt { height: 38px; position: relative; white-space: nowrap; padding-left: 51px; }
    .col1 .opt { padding-left: 50px; }
    .col2 .opt:last-child { letter-spacing: 0.320px; }
    .opt.two { height: 72px; }
    .opt i { position: absolute; left: 9px; top: 0; width: 26px; height: 26px; border: 2px solid #767676; border-radius: 50%; }
    .col1 .opt i { left: 8px; }
    .opt.on i { border-color: #2f7bf6; background: radial-gradient(circle, #2f7bf6 7.500px, #fff 8.500px); }
    .wrap { display: block; margin-left: -51px; }
    .bottom { display: flex; gap: 40px; margin-left: 50px; }
    .neighbors { width: 800px; height: 1058px; --drop: 3px; }
    .map { width: 1200px; height: 1058px; --drop: 3px; }
    .grid { display: flex; flex-direction: column; height: 1000px; font-size: 23.250px; }
    .row { display: grid; grid-template-columns: 120px 470px 56px 1fr; padding-left: 20px; height: 52px; border-bottom: 2px dashed #ddd; line-height: 44px; white-space: nowrap; }
    .row.head { height: 54px; border-bottom: 2px solid #ddd; color: #666; line-height: 64px; }
    .row.tall { height: 54px; line-height: 44px; } .row.mid { line-height: 39px; } .row.low { line-height: 44px; } .row.last { border-bottom: 0; }
    .row .rel { margin: 8px 0 0 6px; }
    .row.mid .rel { margin-top: 6px; }
    .act { margin: 6px 0 0 44px; width: 38px; height: 38px; border: 2px solid #ccc; border-radius: 8px; background: linear-gradient(#eee, #ededed 48%, #e4e4e4 52%, #efefef); display: flex; align-items: center; justify-content: center; padding: 3px 0 0 4px; }
    .tall .act { height: 40px; } .mid .act { margin-top: 4px; height: 40px; } .mid .act, .low .act { padding-top: 1px; }
    .pager { margin-top: auto; height: 62px; border-top: 2px solid #ddd; padding: 10px 0 0 14px; }
    .page { width: 36px; height: 38px; border: 2px solid #ddd; border-radius: 6px; text-align: center; font: bold 27px/37px "DejaVu Sans", sans-serif; color: #222; }
  `;

  private option(label: string, on = false, second = "") {
    return html`<div class=${classMap({ opt: true, on, two: !!second })}><i></i>${label}${second ? html`<span class="wrap">${second}</span>` : nothing}</div>`;
  }

  render() {
    return html`
      <header>
        <svg class="logo" viewBox="52 13 169 116">
          <path d="M102 17Q97 46 113 78Q92 81 75 75Q62 69 55 57Q64 33 102 17Z" fill="#2c6cad" />
          <path d="M158 13Q186 18 203 34Q203 46 196 53Q175 70 133 77Q126 38 158 13Z" fill="#5aa950" />
          <path d="M207 38Q222 53 220 75Q214 108 170 125Q160 108 141 96Q205 72 207 38Z" fill="#e27637" />
          <path d="M57 88Q89 110 131 98Q152 108 167 123Q145 130 121 128Q70 120 57 88Z" fill="#c8cfde" />
        </svg>
        <div class="brand"><div class="name">USBoundary.com</div><div class="tag">U.S. area boundary, data, graphs, tools and services.</div></div>
        <div class="shares">
          ${SHARES.map((s) => html`<div class="share link"><svg class=${s.k} width="41" height="40" viewBox="0 0 41 40" fill="#fff">${s.g}</svg>${s.t}</div>`)}
        </div>
      </header>
      <div class="menu">
        <nav><span>Home</span><span>Areas</span><span>Tools</span><span>Resources</span><span>About</span></nav>
        <div class="find">City, county, zip code, etc.</div>
      </div>
      <div class="crumbs"><span class="link">Home</span> <i>/</i> <span class="link">Tools</span> <i>/</i> Neighbors</div>
      <div class="top">
        <div class="left">
          <fold-panel class="area" heading="Select Area">
            <div class="pick"><span>City, county, zip code, etc.</span><div class="go"><svg width="22" height="20" viewBox="0 0 22 20" fill="none" stroke="#888"><circle cx="14" cy="7.500" r="5.500" stroke-width="2.600" /><path d="M9.500 12L2 18" stroke-width="3.500" /></svg></div></div>
            <div class="chosen link">Census Tract 254.01</div>
          </fold-panel>
          <fold-panel class="relations" heading="Select Area to Neighbor Relationships">
            <div class="toggles link">
              ${["Touches", "Contains", "Contained", "Overlaps"].map((t) => html`<div class="tog ${t.toLowerCase()}">${relIcon(t)}<span>${t}</span></div>`)}
            </div>
          </fold-panel>
        </div>
        <fold-panel class="types" heading="Select Neighbor Area Type">
          <div class="radios link">
            <div class="col1">
              ${["State and Equivalent", "County", "County Subdivision", "Place", "Elementary School District", "Secondary School District", "Unified School District"].map((t) => this.option(t))}
            </div>
            <div class="col2">
              ${this.option("State Legislative District Lower", false, "Chamber")}
              ${this.option("State Legislative District Upper", false, "Chamber")}
              ${this.option("111th Congressional District")}
              ${this.option("Public Use Microdata Area")}
              ${this.option("Census Tract", true)}
              ${this.option("Voting District")}
              ${this.option("5-Digit ZIP Code Tabulation Area")}
            </div>
          </div>
        </fold-panel>
      </div>
      <div class="bottom">
        <fold-panel class="neighbors" heading="Neighbor">
          <div class="grid">
            <div class="row head"><span>UAID</span><span>Neighbor</span><span>Rel</span><span>Actions</span></div>
            ${ROWS.map((r) => html`<div class="row ${r.c}"><span class="link">${r.id}</span><span class="link">Census Tract ${r.n}</span>${relIcon("Touches")}<div class="act"><svg width="14" height="9" viewBox="0 0 14 9"><path d="M0 0H14L7 9Z" fill="#888" /></svg></div></div>`)}
            <div class="pager"><div class="page">1</div></div>
          </div>
        </fold-panel>
        <fold-panel class="map" heading="On the Map"><tract-map></tract-map></fold-panel>
      </div>
    `;
  }
}
